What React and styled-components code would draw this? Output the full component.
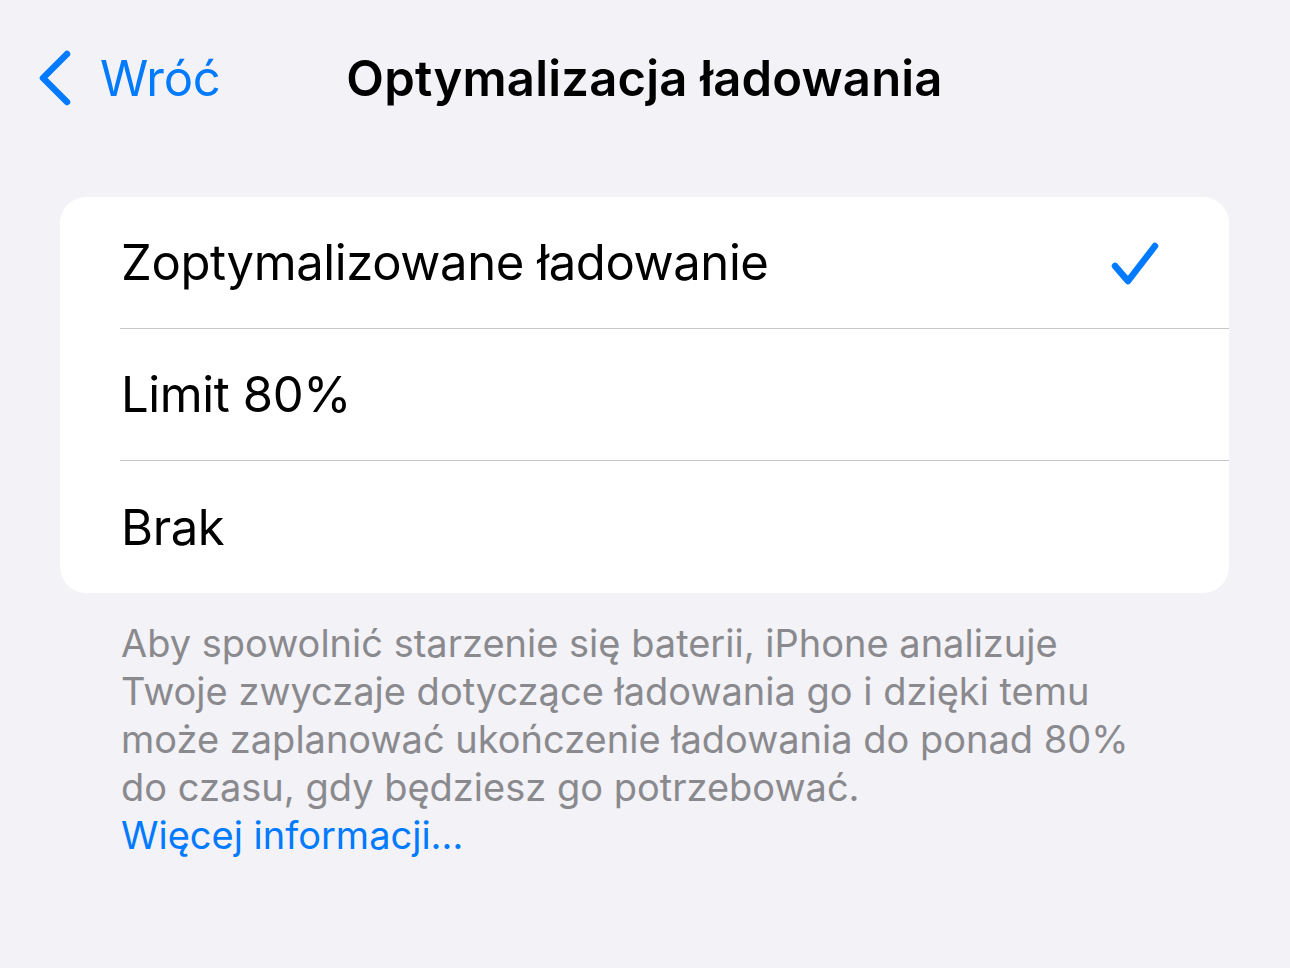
import React from "react";
import styled, { createGlobalStyle } from "styled-components";

const Global = createGlobalStyle`
  html, body {
    margin: 0;
    background: #f2f2f7;
    font-family: Inter, "Noto Sans", sans-serif;
    -webkit-font-smoothing: antialiased;
  }
`;

const options = [
  { label: "Zoptymalizowane ładowanie", checked: true },
  { label: "Limit 80%" },
  { label: "Brak" },
];

function App() {
  return (
    <Page>
      <Global />
      <Header>
        <Back>
          <svg width="34" height="56" viewBox="0 0 34 56">
            <path
              d="M29 4 L5 28 L29 52"
              fill="none"
              stroke="#007aff"
              strokeWidth="6.5"
              strokeLinecap="round"
              strokeLinejoin="round"
            />
          </svg>
          <span>Wróć</span>
        </Back>
        <Title>Optymalizacja ładowania</Title>
        <div />
      </Header>

      <Card>
        {options.map((o, i) => (
          <Row key={o.label} last={i === options.length - 1}>
            <Label>{o.label}</Label>
            {o.checked && (
              <Check width="50" height="48" viewBox="0 0 50 48">
                <path
                  d="M4 24 L17 39 L44 4"
                  fill="none"
                  stroke="#007aff"
                  strokeWidth="6.5"
                  strokeLinecap="round"
                  strokeLinejoin="round"
                />
              </Check>
            )}
          </Row>
        ))}
      </Card>

      <Footer>
        Aby spowolnić starzenie się baterii, iPhone analizuje
        <br />
        Twoje zwyczaje dotyczące ładowania go i dzięki temu
        <br />
        może zaplanować ukończenie ładowania do ponad 80%
        <br />
        do czasu, gdy będziesz go potrzebować.
        <br />
        <MoreLink href="#">Więcej informacji…</MoreLink>
      </Footer>
    </Page>
  );
}

export default App;

const Page = styled.div`
  width: 1290px;
  height: 968px;
  box-sizing: border-box;
  padding: 0 61px 0 60px;
  overflow: hidden;
`;

const Header = styled.div`
  display: grid;
  grid-template-columns: 1fr auto 1fr;
  align-items: center;
  height: 156px;
  margin: 0 -60px 0 -60px;
  box-sizing: border-box;
`;

const Back = styled.div`
  display: flex;
  align-items: center;
  gap: 28px;
  padding-left: 38px;
  color: #007aff;
  font-size: 49px;
  letter-spacing: -0.3px;
  span {
    line-height: 1;
  }
`;

const Title = styled.div`
  font-size: 49px;
  font-weight: 600;
  color: #000;
  letter-spacing: 0.2px;
`;

const Card = styled.div`
  margin-top: 41px;
  background: #fff;
  border-radius: 26px;
  overflow: hidden;
`;

const Row = styled.div`
  display: flex;
  align-items: center;
  justify-content: space-between;
  height: 132px;
  margin-left: 60px;
  padding-right: 68px;
  box-sizing: border-box;
  border-bottom: ${(p) => (p.last ? "none" : "1px solid #c6c6c8")};
`;

const Label = styled.div`
  font-size: 49px;
  color: #000;
  letter-spacing: -0.4px;
  padding-left: 1px;
`;

const Check = styled.svg`
  margin-top: 6px;
`;

const Footer = styled.div`
  padding: 26px 0 0 61px;
  font-size: 38px;
  line-height: 48px;
  color: #8a8a8e;
  letter-spacing: 0;
`;

const MoreLink = styled.a`
  color: #007aff;
  text-decoration: none;
`;
